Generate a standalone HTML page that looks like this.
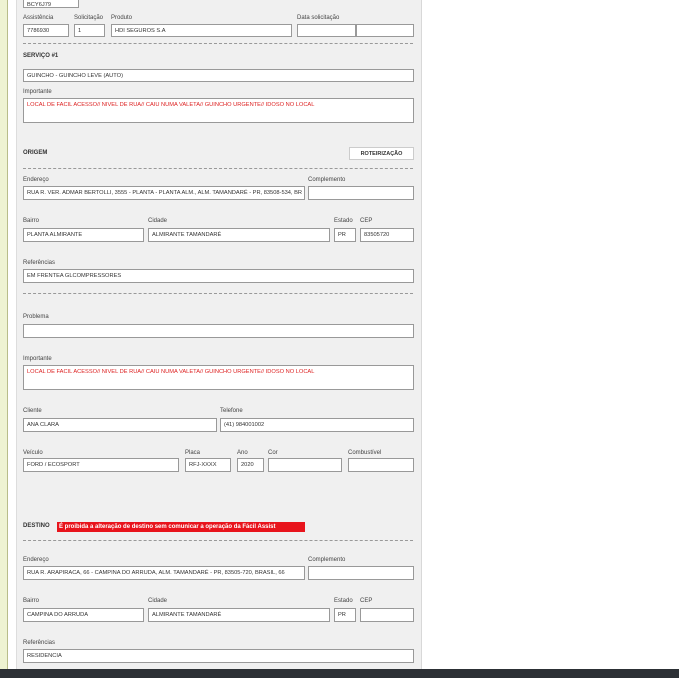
<!DOCTYPE html>
<html><head><meta charset="utf-8"><style>
body{margin:0;width:679px;height:678px;overflow:hidden;background:#fff;font-family:"Liberation Sans",sans-serif;position:relative}
.a{position:absolute}
.lb{position:absolute;font-size:6px;color:#444;line-height:7px}
.in{position:absolute;box-sizing:border-box;background:#fff;border:1px solid #999;font-size:5.7px;color:#333;display:flex;align-items:center;padding-left:3px;white-space:nowrap;overflow:hidden}
.ta{color:#d22;align-items:flex-start;padding-top:3px}
.ds{position:absolute;left:23px;width:390px;border-top:1px dashed #999;height:0}
.h{position:absolute;font-size:6px;font-weight:bold;color:#333}
</style></head><body>
<div class="a" style="left:0;top:0;width:7px;height:678px;background:#eef3d2"></div>
<div class="a" style="left:7px;top:0;width:1px;height:678px;background:#b8bd8a"></div>
<div class="a" style="left:16px;top:0;width:404px;height:669px;background:#f0f0f0;border-left:1px solid #ddd;border-right:1px solid #d8d8d8"></div>

<div class="in" style="left:23px;top:-3px;width:56px;height:11px;padding-top:5px">BCY6J79</div>
<div class="lb" style="left:23px;top:15px">Assistência</div>
<div class="lb" style="left:74px;top:15px">Solicitação</div>
<div class="lb" style="left:111px;top:15px">Produto</div>
<div class="lb" style="left:297px;top:15px">Data solicitação</div>
<div class="in" style="left:23px;top:24px;width:46px;height:13px">7786930</div>
<div class="in" style="left:74px;top:24px;width:31px;height:13px">1</div>
<div class="in" style="left:111px;top:24px;width:181px;height:13px">HDI SEGUROS S.A</div>
<div class="in" style="left:297px;top:24px;width:59px;height:13px"></div>
<div class="in" style="left:356px;top:24px;width:58px;height:13px"></div>
<div class="ds" style="top:43px"></div>
<div class="h" style="left:23px;top:53px">SERVIÇO #1</div>
<div class="in" style="left:23px;top:69px;width:391px;height:13px">GUINCHO - GUINCHO LEVE (AUTO)</div>
<div class="lb" style="left:23px;top:89px">Importante</div>
<div class="in ta" style="left:23px;top:98px;width:391px;height:25px">LOCAL DE FACIL ACESSO// NIVEL DE RUA// CAIU NUMA VALETA// GUINCHO URGENTE// IDOSO NO LOCAL</div>

<div class="h" style="left:23px;top:150px">ORIGEM</div>
<div class="in" style="left:349px;top:147px;width:65px;height:13px;font-weight:bold;justify-content:center;padding:0;border-color:#ccc;font-size:5.5px">ROTEIRIZAÇÃO</div>
<div class="ds" style="top:168px"></div>
<div class="lb" style="left:23px;top:177px">Endereço</div>
<div class="lb" style="left:308px;top:177px">Complemento</div>
<div class="in" style="left:23px;top:186px;width:282px;height:14px">RUA R. VER. ADMAR BERTOLLI, 3555 - PLANTA - PLANTA ALM., ALM. TAMANDARÉ - PR, 83508-534, BR</div>
<div class="in" style="left:308px;top:186px;width:106px;height:14px"></div>
<div class="lb" style="left:23px;top:218px">Bairro</div>
<div class="lb" style="left:148px;top:218px">Cidade</div>
<div class="lb" style="left:334px;top:218px">Estado</div>
<div class="lb" style="left:360px;top:218px">CEP</div>
<div class="in" style="left:23px;top:228px;width:121px;height:14px">PLANTA ALMIRANTE</div>
<div class="in" style="left:148px;top:228px;width:182px;height:14px">ALMIRANTE TAMANDARÉ</div>
<div class="in" style="left:334px;top:228px;width:22px;height:14px">PR</div>
<div class="in" style="left:360px;top:228px;width:54px;height:14px">83505720</div>
<div class="lb" style="left:23px;top:260px">Referências</div>
<div class="in" style="left:23px;top:269px;width:391px;height:14px">EM FRENTEA GLCOMPRESSORES</div>
<div class="ds" style="top:293px"></div>
<div class="lb" style="left:23px;top:314px">Problema</div>
<div class="in" style="left:23px;top:324px;width:391px;height:14px"></div>
<div class="lb" style="left:23px;top:356px">Importante</div>
<div class="in ta" style="left:23px;top:365px;width:391px;height:25px">LOCAL DE FACIL ACESSO// NIVEL DE RUA// CAIU NUMA VALETA// GUINCHO URGENTE// IDOSO NO LOCAL</div>
<div class="lb" style="left:23px;top:408px">Cliente</div>
<div class="lb" style="left:220px;top:408px">Telefone</div>
<div class="in" style="left:23px;top:418px;width:194px;height:14px">ANA CLARA</div>
<div class="in" style="left:220px;top:418px;width:194px;height:14px">(41) 984001002</div>
<div class="lb" style="left:23px;top:450px">Veículo</div>
<div class="lb" style="left:185px;top:450px">Placa</div>
<div class="lb" style="left:237px;top:450px">Ano</div>
<div class="lb" style="left:268px;top:450px">Cor</div>
<div class="lb" style="left:348px;top:450px">Combustível</div>
<div class="in" style="left:23px;top:458px;width:156px;height:14px">FORD / ECOSPORT</div>
<div class="in" style="left:185px;top:458px;width:46px;height:14px">RFJ-XXXX</div>
<div class="in" style="left:237px;top:458px;width:27px;height:14px">2020</div>
<div class="in" style="left:268px;top:458px;width:74px;height:14px"></div>
<div class="in" style="left:348px;top:458px;width:66px;height:14px"></div>

<div class="h" style="left:23px;top:523px">DESTINO</div>
<div class="a" style="left:57px;top:522px;width:248px;height:10px;background:#e8141c;color:#fff;font-size:6px;font-weight:bold;line-height:10px;padding-left:2px;box-sizing:border-box;white-space:nowrap">É proibida a alteração de destino sem comunicar a operação da Fácil Assist</div>
<div class="ds" style="top:540px"></div>
<div class="lb" style="left:23px;top:557px">Endereço</div>
<div class="lb" style="left:308px;top:557px">Complemento</div>
<div class="in" style="left:23px;top:566px;width:282px;height:14px">RUA R. ARAPIRACA, 66 - CAMPINA DO ARRUDA, ALM. TAMANDARÉ - PR, 83505-720, BRASIL, 66</div>
<div class="in" style="left:308px;top:566px;width:106px;height:14px"></div>
<div class="lb" style="left:23px;top:598px">Bairro</div>
<div class="lb" style="left:148px;top:598px">Cidade</div>
<div class="lb" style="left:334px;top:598px">Estado</div>
<div class="lb" style="left:360px;top:598px">CEP</div>
<div class="in" style="left:23px;top:608px;width:121px;height:14px">CAMPINA DO ARRUDA</div>
<div class="in" style="left:148px;top:608px;width:182px;height:14px">ALMIRANTE TAMANDARÉ</div>
<div class="in" style="left:334px;top:608px;width:22px;height:14px">PR</div>
<div class="in" style="left:360px;top:608px;width:54px;height:14px"></div>
<div class="lb" style="left:23px;top:640px">Referências</div>
<div class="in" style="left:23px;top:649px;width:391px;height:14px">RESIDENCIA</div>

<div class="a" style="left:0;top:669px;width:679px;height:9px;background:#2c3035"></div>
</body></html>
